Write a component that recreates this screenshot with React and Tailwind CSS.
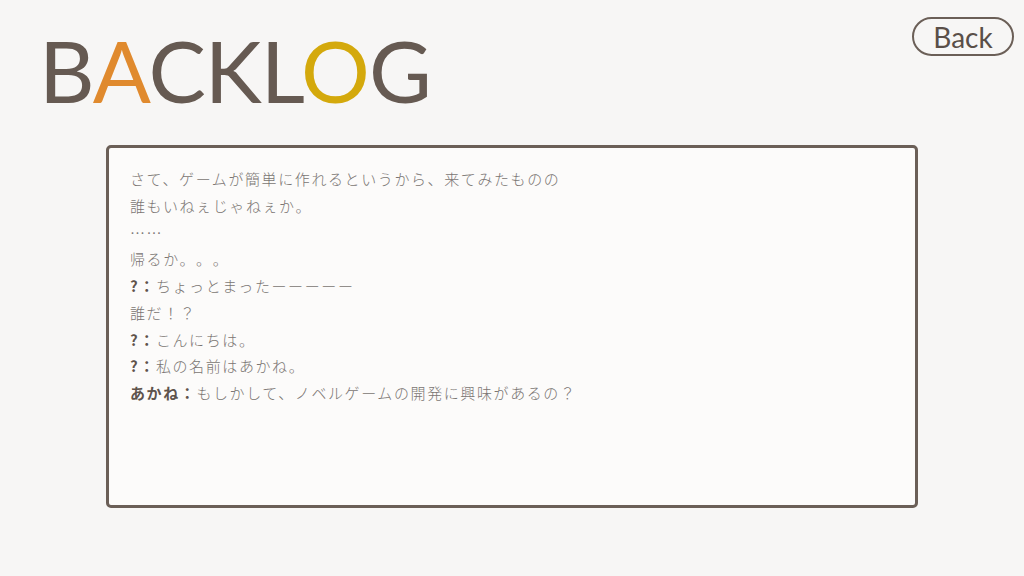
const lines = [
  { text: 'さて、ゲームが簡単に作れるというから、来てみたものの' },
  { text: '誰もいねぇじゃねぇか。' },
  { text: '……' },
  { text: '帰るか。。。' },
  { name: '?', text: 'ちょっとまったーーーーー' },
  { text: '誰だ！？' },
  { name: '?', text: 'こんにちは。' },
  { name: '?', text: '私の名前はあかね。' },
  { name: 'あかね', text: 'もしかして、ノベルゲームの開発に興味があるの？' },
]

const App = () => {
  return (
    <div className="w-[1024px] h-[576px] bg-[#f7f6f5] flex flex-col overflow-hidden">
      <div className="flex justify-between items-start">
        <h1
          className="ml-[39px] mt-[27px] text-[86px] leading-none tracking-[-1px] text-[#665a52] font-normal"
          style={{ fontFamily: 'Lato, "Open Sans", sans-serif' }}
        >
          B<span className="text-[#e08a2e]">A</span>CKL<span className="text-[#d4a90c]">O</span>G
        </h1>
        <button
          className="mt-[17px] mr-[10px] w-[102px] h-[39px] rounded-full border-2 border-[#6b5f57] text-[28px] leading-none text-[#5a4f48] flex items-center justify-center"
          style={{ fontFamily: 'Lato, "Open Sans", sans-serif' }}
        >
          Back
        </button>
      </div>
      <div className="mx-auto mt-[32px] w-[812px] h-[363px] bg-[#fcfbfa] border-[3px] border-[#6b5f57] rounded-[5px] px-[21px] pt-[18px]">
        <div
          className="text-[15px] leading-[26.75px] text-[#7a7572] tracking-[1.6px] font-light [text-spacing-trim:space-all]"
          style={{ fontFamily: '"Noto Sans CJK JP", sans-serif' }}
        >
          {lines.map((l, i) => (
            <div key={i}>
              {l.name && <span className="font-bold text-[#5e534c]">{l.name}：</span>}
              {l.text}
            </div>
          ))}
        </div>
      </div>
    </div>
  )
}

export default App
